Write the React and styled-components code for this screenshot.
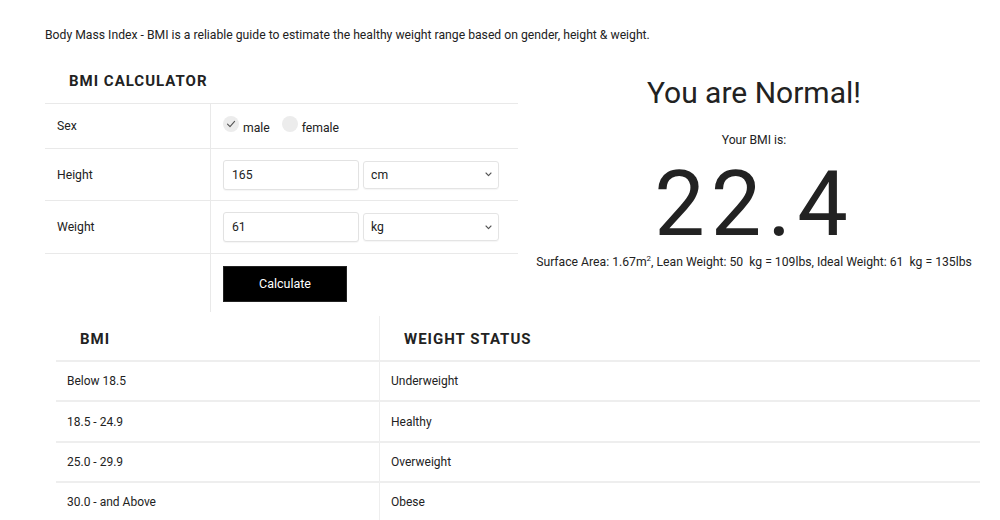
import styled, { createGlobalStyle } from "styled-components";

const GlobalStyle = createGlobalStyle`
  *, *::before, *::after {
    box-sizing: border-box;
  }
  body {
    margin: 0;
    background: #fff;
    color: #222;
    font-family: Roboto, "Liberation Sans", Arial, sans-serif;
  }
`;

const ranges = [
  { bmi: "Below 18.5", status: "Underweight" },
  { bmi: "18.5 - 24.9", status: "Healthy" },
  { bmi: "25.0 - 29.9", status: "Overweight" },
  { bmi: "30.0 - and Above", status: "Obese" },
];

const Check = () => (
  <svg width="10" height="10" viewBox="0 0 10 10" fill="none">
    <path d="M1.5 5.2 L4 7.6 L8.6 2.4" stroke="#555" strokeWidth="1.1" strokeLinecap="round" strokeLinejoin="round" />
  </svg>
);

const Chevron = () => (
  <svg width="7" height="5" viewBox="0 0 7 5" fill="none">
    <path d="M1 1 L3.5 3.6 L6 1" stroke="#555" strokeWidth="1.1" strokeLinecap="round" strokeLinejoin="round" />
  </svg>
);

const App = () => {
  return (
    <>
      <GlobalStyle />
      <Page>
        <Intro>
          Body Mass Index - BMI is a reliable guide to estimate the healthy weight range based on gender, height &amp; weight.
        </Intro>

        <Top>
          <CalcPanel>
            <PanelTitle>BMI CALCULATOR</PanelTitle>

            <FormRow $h={45}>
              <Label>Sex</Label>
              <Field>
                <Radio>
                  <RadioDot>
                    <Check />
                  </RadioDot>
                  male
                </Radio>
                <Radio>
                  <RadioDot />
                  female
                </Radio>
              </Field>
            </FormRow>

            <FormRow $h={52}>
              <Label>Height</Label>
              <Field>
                <TextInput defaultValue="165" />
                <Select>
                  cm
                  <Chevron />
                </Select>
              </Field>
            </FormRow>

            <FormRow $h={53}>
              <Label>Weight</Label>
              <Field>
                <TextInput defaultValue="61" />
                <Select>
                  kg
                  <Chevron />
                </Select>
              </Field>
            </FormRow>

            <FormRow $h={59}>
              <Label />
              <Field>
                <CalcButton>Calculate</CalcButton>
              </Field>
            </FormRow>
          </CalcPanel>

          <ResultPanel>
            <Verdict>You are Normal!</Verdict>
            <BmiCaption>Your BMI is:</BmiCaption>
            <BmiValue>22.4</BmiValue>
            <Details>
              Surface Area: 1.67m<sup>2</sup>, Lean Weight: 50&nbsp; kg = 109lbs, Ideal Weight: 61&nbsp; kg = 135lbs
            </Details>
          </ResultPanel>
        </Top>

        <RangeTable>
          <RangeHead>
            <HeadCell>BMI</HeadCell>
            <HeadCell>WEIGHT STATUS</HeadCell>
          </RangeHead>
          {ranges.map((r) => (
            <RangeRow key={r.bmi}>
              <Cell>{r.bmi}</Cell>
              <Cell>{r.status}</Cell>
            </RangeRow>
          ))}
        </RangeTable>
      </Page>
    </>
  );
};

const Page = styled.div`
  padding: 27px 10px 0 45px;
  height: 520px;
  overflow: hidden;
`;

const Intro = styled.p`
  margin: 0;
  font-size: 12.2px;
  line-height: 16px;
  color: #222;
`;

const Top = styled.div`
  display: flex;
  margin-top: 17px;
`;

const CalcPanel = styled.section`
  width: 473px;
  flex: none;
`;

const PanelTitle = styled.h2`
  margin: 0;
  height: 43px;
  line-height: 43px;
  padding: 0 24px;
  font-size: 15px;
  font-weight: 700;
  letter-spacing: 1px;
  color: #222;
`;

const FormRow = styled.div`
  display: grid;
  grid-template-columns: 165px 1fr;
  height: ${({ $h }) => $h}px;
  border-top: 1px solid #e9e9e9;
`;

const Label = styled.div`
  display: flex;
  align-items: center;
  padding: 0 12px;
  font-size: 12.2px;
  color: #222;
`;

const Field = styled.div`
  display: flex;
  align-items: center;
  gap: 4px;
  padding: 0 12px;
  border-left: 1px solid #e9e9e9;
`;

const Radio = styled.label`
  display: flex;
  align-items: center;
  gap: 4px;
  margin-right: 8px;
  font-size: 12.2px;
  color: #222;
  padding-top: 4px;
`;

const RadioDot = styled.span`
  display: flex;
  align-items: center;
  justify-content: center;
  width: 16px;
  height: 16px;
  border-radius: 50%;
  background: #ececec;
  margin-top: -8px;
`;

const TextInput = styled.input`
  width: 136px;
  height: 30px;
  border: 1px solid #e2e2e2;
  border-radius: 3px;
  padding: 0 8px;
  font-family: inherit;
  font-size: 12.2px;
  color: #222;
  outline: none;
  box-shadow: 0 1px 1px rgba(0, 0, 0, 0.04);
`;

const Select = styled.div`
  display: flex;
  align-items: center;
  justify-content: space-between;
  width: 136px;
  height: 28px;
  border: 1px solid #e4e4e4;
  border-radius: 3px;
  padding: 0 6px 0 7px;
  font-size: 12.2px;
  color: #222;
  box-shadow: 0 1px 1px rgba(0, 0, 0, 0.04);
`;

const CalcButton = styled.button`
  width: 124px;
  height: 36px;
  margin-top: 1px;
  border: 1px solid #222;
  background: #000;
  color: #fff;
  font-family: inherit;
  font-size: 12.5px;
  cursor: pointer;
`;

const ResultPanel = styled.section`
  flex: 1;
  text-align: center;
  color: #222;
`;

const Verdict = styled.h1`
  margin: 13px 0 0;
  font-size: 30px;
  font-weight: 400;
  line-height: 40px;
`;

const BmiCaption = styled.p`
  margin: 19px 0 0;
  font-size: 12.2px;
  line-height: 16px;
`;

const BmiValue = styled.div`
  margin-top: 8px;
  font-size: 90px;
  line-height: 98px;
  letter-spacing: 6px;
  font-weight: 400;
`;

const Details = styled.p`
  margin: 0;
  font-size: 12.2px;
  line-height: 16px;
  white-space: nowrap;

  sup {
    font-size: 8px;
    vertical-align: top;
    position: relative;
    top: -3px;
  }
`;

const RangeTable = styled.div`
  width: 924px;
  margin: 4px 0 0 11px;
`;

const RangeHead = styled.div`
  display: grid;
  grid-template-columns: 323px 1fr;
  height: 46px;
  border-bottom: 2px solid #eee;
`;

const HeadCell = styled.div`
  display: flex;
  align-items: center;
  padding: 2px 24px 0;
  font-size: 15px;
  font-weight: 700;
  letter-spacing: 1px;
  color: #222;

  & + & {
    border-left: 1px solid #eee;
  }
`;

const RangeRow = styled.div`
  display: grid;
  grid-template-columns: 323px 1fr;
  height: 40.4px;
  border-bottom: 2px solid #eee;
`;

const Cell = styled.div`
  display: flex;
  align-items: center;
  padding: 0 11px;
  font-size: 12px;
  color: #222;

  & + & {
    border-left: 1px solid #eee;
  }
`;

export default App;
